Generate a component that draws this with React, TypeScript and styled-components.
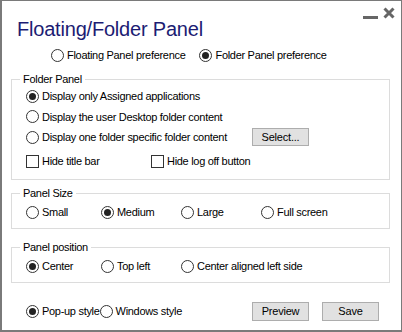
import React from "react";
import styled, { createGlobalStyle } from "styled-components";

const Global = createGlobalStyle`
  html, body { margin: 0; padding: 0; background: #fff; }
  body {
    font-family: "Liberation Sans", Arial, sans-serif;
    font-size: 11px;
    letter-spacing: -0.3px;
    color: #000;
  }
  * { box-sizing: border-box; }
`;

const Window = styled.div`
  width: 402px;
  height: 332px;
  border: 1px solid #7a7a7a;
  border-left-width: 2px;
  border-bottom-width: 2px;
  background: #fff;
  display: flex;
  flex-direction: column;
`;

const TitleBar = styled.div`
  display: flex;
  justify-content: space-between;
  align-items: flex-start;
  height: 40px;
`;

const Title = styled.h1`
  margin: 0;
  padding: 16px 0 0 15px;
  font-weight: normal;
  font-size: 20px;
  letter-spacing: -0.2px;
  color: #1c1c73;
  line-height: 24px;
`;

const Controls = styled.div`
  display: flex;
  align-items: flex-start;
  gap: 5px;
  padding: 6px 6px 0 0;
`;

const TopRow = styled.div`
  display: flex;
  gap: 14px;
  padding-left: 49px;
  height: 28px;
  align-items: center;
`;

const Group = styled.fieldset`
  margin: 0 11px 0 9px;
  padding: 0 0 0 14px;
  border: 1px solid #dcdcdc;
  display: flex;
  flex-direction: column;
  min-width: 0;
`;

const Legend = styled.legend`
  padding: 0 3px;
  margin-left: -6px;
  line-height: 14px;
`;

const Row = styled.div<{ $h: number }>`
  display: flex;
  align-items: center;
  height: ${(p) => p.$h}px;
`;

const Cell = styled.div<{ $w?: number }>`
  width: ${(p) => (p.$w ? `${p.$w}px` : "auto")};
  flex: none;
  display: flex;
  align-items: center;
`;

const Option = styled.label`
  display: inline-flex;
  align-items: center;
  gap: 3px;
  white-space: nowrap;
`;

const Circle = styled.span<{ $on?: boolean }>`
  width: 13px;
  height: 13px;
  border-radius: 50%;
  border: 1px solid #333;
  display: inline-flex;
  align-items: center;
  justify-content: center;
  flex: none;
  &::after {
    content: "";
    width: 7px;
    height: 7px;
    border-radius: 50%;
    background: #222;
    display: ${(p) => (p.$on ? "block" : "none")};
  }
`;

const Box = styled.span`
  width: 13px;
  height: 13px;
  border: 1px solid #333;
  flex: none;
`;

const Button = styled.button<{ $h?: number }>`
  width: 57px;
  height: ${(p) => p.$h ?? 19}px;
  background: #e1e1e1;
  border: 1px solid #adadad;
  font-family: inherit;
  font-size: 11px;
  letter-spacing: -0.2px;
  padding: 0;
  color: #000;
`;

const Spacer = styled.div<{ $h: number }>`
  height: ${(p) => p.$h}px;
  flex: none;
`;

const Footer = styled.div`
  display: flex;
  align-items: center;
  padding: 0 22px 0 24px;
  height: 24px;
`;

const FooterButtons = styled.div`
  margin-left: auto;
  display: flex;
  gap: 13px;
`;

const Radio = ({ label, on }: { label: string; on?: boolean }) => (
  <Option>
    <Circle $on={on} />
    <span>{label}</span>
  </Option>
);

const Check = ({ label }: { label: string }) => (
  <Option>
    <Box />
    <span>{label}</span>
  </Option>
);

export default function App() {
  return (
    <>
      <Global />
      <Window>
        <TitleBar>
          <Title>Floating/Folder Panel</Title>
          <Controls>
            <svg width="15" height="12" viewBox="0 0 15 12">
              <rect x="0" y="9" width="15" height="3" fill="#666" />
            </svg>
            <svg width="12" height="12" viewBox="0 0 12 12">
              <path d="M1.5 1.5 L10.5 10.5 M10.5 1.5 L1.5 10.5" stroke="#666" strokeWidth="3" />
            </svg>
          </Controls>
        </TitleBar>
        <TopRow>
          <Radio label="Floating Panel preference" />
          <Radio label="Folder Panel preference" on />
        </TopRow>
        <Spacer $h={3} />
        <Group>
          <Legend>Folder Panel</Legend>
          <Row $h={20}>
            <Radio label="Display only Assigned applications" on />
          </Row>
          <Row $h={21}>
            <Radio label="Display the user Desktop folder content" />
          </Row>
          <Row $h={20}>
            <Cell $w={226}>
              <Radio label="Display one folder specific folder content" />
            </Cell>
            <Button $h={18}>Select...</Button>
          </Row>
          <Row $h={28}>
            <Cell $w={125}>
              <Check label="Hide title bar" />
            </Cell>
            <Check label="Hide log off button" />
          </Row>
          <Spacer $h={4} />
        </Group>
        <Spacer $h={6} />
        <Group>
          <Legend>Panel Size</Legend>
          <Row $h={24}>
            <Cell $w={75}><Radio label="Small" /></Cell>
            <Cell $w={80}><Radio label="Medium" on /></Cell>
            <Cell $w={80}><Radio label="Large" /></Cell>
            <Cell><Radio label="Full screen" /></Cell>
          </Row>
          <Spacer $h={4} />
        </Group>
        <Spacer $h={11} />
        <Group>
          <Legend>Panel position</Legend>
          <Row $h={24}>
            <Cell $w={75}><Radio label="Center" on /></Cell>
            <Cell $w={80}><Radio label="Top left" /></Cell>
            <Cell><Radio label="Center aligned left side" /></Cell>
          </Row>
          <Spacer $h={4} />
        </Group>
        <Spacer $h={16} />
        <Footer>
          <Radio label="Pop-up style" on />
          <Radio label="Windows style" />
          <FooterButtons>
            <Button>Preview</Button>
            <Button>Save</Button>
          </FooterButtons>
        </Footer>
      </Window>
    </>
  );
}
